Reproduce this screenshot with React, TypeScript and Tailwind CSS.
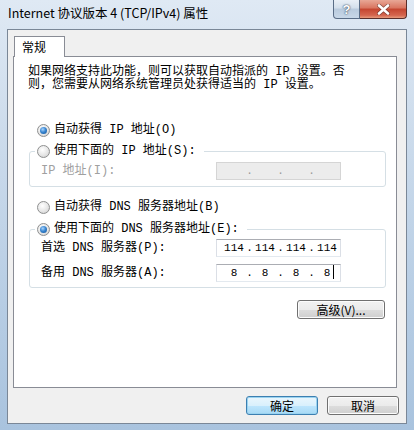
const cjk = "font-['Noto_Sans_CJK_SC',sans-serif]";
const simsun = "font-['Liberation_Mono','Noto_Sans_CJK_SC',monospace]";

function Radio({ checked }: { checked?: boolean }) {
  return (
    <span className="relative inline-flex h-[13px] w-[13px] shrink-0 items-center justify-center rounded-full border border-[#8e8f8f] bg-[radial-gradient(circle_at_40%_35%,#ffffff_0%,#e6e6e6_55%,#c9c9c9_100%)]">
      {checked && (
        <span className="h-[7px] w-[7px] rounded-full bg-[radial-gradient(circle_at_40%_35%,#a8d4ff_0%,#3a86d0_45%,#0d4f96_100%)]" />
      )}
    </span>
  );
}

function RadioRow({ label, checked }: { label: string; checked?: boolean }) {
  return (
    <div className="flex h-[13px] items-center">
      <Radio checked={checked} />
      <span className={`ml-[4px] whitespace-pre text-[12px] leading-[13px] text-black ${simsun}`}>{label}</span>
    </div>
  );
}

function IpBox({ values, disabled, caret }: { values: string[]; disabled?: boolean; caret?: boolean }) {
  return (
    <div
      className={`flex h-[18px] w-[125px] items-center border pl-[5px] ${
        disabled
          ? "border-[#d5d5d5] bg-[#ececec] text-[#9a9a9a]"
          : "border-[#abadb3] border-b-[#e3e9ef] border-l-[#dbdfe6] border-r-[#dbdfe6] bg-white text-black"
      } ${simsun} text-[11px] leading-[14px]`}
    >
      {values.map((v, i) => (
        <div key={i} className="flex">
          <span className="relative w-[24px] text-center">
            {v}
            {caret && i === 3 && (
              <span className="absolute right-[5px] top-[-1px] h-[14px] w-px bg-black" />
            )}
          </span>
          {i < 3 && <span className="w-[7px] text-center">.</span>}
        </div>
      ))}
    </div>
  );
}

function WinButton({ label, focused, className = "" }: { label: string; focused?: boolean; className?: string }) {
  return (
    <div
      className={`flex h-[19px] w-[72px] items-center justify-center rounded-[3px] border ${
        focused
          ? "border-[#3c7fb1] bg-[linear-gradient(180deg,#eaf6fd_0%,#d9f0fc_50%,#bee6fd_51%,#a7d9f5_100%)] shadow-[inset_0_0_0_1px_#9ad3f0]"
          : "border-[#707070] bg-[linear-gradient(180deg,#f2f2f2_0%,#ebebeb_50%,#dddddd_51%,#cfcfcf_100%)] shadow-[inset_0_0_0_1px_#fcfcfc]"
      } ${cjk} text-[12px] leading-[14px] text-black ${className}`}
    >
      {label}
    </div>
  );
}

export default function App() {
  return (
    <div className="flex h-[430px] w-[414px] flex-col overflow-hidden bg-[linear-gradient(180deg,#dfe9f4_0%,#cddcec_30%,#b7cde4_70%,#a9c3de_100%)] px-[7px]">
      {/* Title bar */}
      <div className="relative flex h-[29px] shrink-0 items-center">
        <span className={`ml-[1px] mt-[-2px] text-[12.5px] text-black ${cjk}`}>
          Internet 协议版本 4 (TCP/IPv4) 属性
        </span>
        <div className="absolute right-[0px] top-0 flex h-[19px]">
          <div className="flex w-[27px] items-center justify-center rounded-bl-[4px] border border-t-0 border-[#5a6d86] bg-[linear-gradient(180deg,#e9eff6_0%,#d3dfeb_45%,#b9cadd_50%,#c8d8e8_100%)] font-['Liberation_Sans',sans-serif] text-[13px] font-bold leading-none text-white [text-shadow:0_0_2px_#3b4a5e,0_0_1px_#3b4a5e]">
            ?
          </div>
          <div className="flex w-[47px] items-center justify-center rounded-br-[4px] border border-l-0 border-t-0 border-[#5a2e2a] bg-[linear-gradient(180deg,#e8a796_0%,#d9745f_45%,#c44530_50%,#d5664f_85%,#e79b7d_100%)]">
            <svg width="13" height="11" viewBox="0 0 13 11">
              <path d="M2 1.5 L11 9.5 M11 1.5 L2 9.5" stroke="#3a1c18" strokeWidth="4" strokeLinecap="round" opacity="0.5" />
              <path d="M2 1.5 L11 9.5 M11 1.5 L2 9.5" stroke="#ffffff" strokeWidth="2.6" strokeLinecap="round" />
            </svg>
          </div>
        </div>
      </div>

      {/* Client area */}
      <div className="flex h-[395px] shrink-0 flex-col border border-[#7a8797] bg-[#f0f0f0]">
        {/* Tab strip */}
        <div className="ml-[6px] mt-[6px] flex">
          <div className={`relative z-10 -mb-px flex h-[21px] w-[51px] items-center border border-b-0 border-[#898c95] bg-white pl-[7px] ${cjk} text-[12px] leading-[14px] text-black`}>
            常规
          </div>
        </div>

        {/* Tab panel */}
        <div className="ml-[5px] flex h-[332px] w-[384px] flex-col border border-[#898c95] bg-white">
          <p className={`ml-[14px] mt-[9px] text-[12px] leading-[13px] text-black ${simsun}`}>
            如果网络支持此功能，则可以获取自动指派的 IP 设置。否
            <br />
            则，您需要从网络系统管理员处获得适当的 IP 设置。
          </p>

          <div className="ml-[23px] mt-[32px]">
            <RadioRow label="自动获得 IP 地址(O)" checked />
          </div>

          <fieldset className="ml-[15px] mt-[8px] w-[357px] rounded-[3px] border border-[#d5dfe5] pb-[6px]">
            <legend className="ml-[5px] bg-white pl-[2px] pr-[8px]">
              <RadioRow label="使用下面的 IP 地址(S):" />
            </legend>
            <div className="mt-[4px] flex items-center pl-[11px]">
              <span className={`w-[175px] text-[12px] leading-[13px] text-[#a0a0a0] ${simsun}`}>IP 地址(I):</span>
              <IpBox values={["", "", "", ""]} disabled />
            </div>
          </fieldset>

          <div className="ml-[23px] mt-[14px]">
            <RadioRow label="自动获得 DNS 服务器地址(B)" />
          </div>

          <fieldset className="ml-[15px] mt-[9px] w-[357px] rounded-[3px] border border-[#d5dfe5] pb-[5px]">
            <legend className="ml-[5px] bg-white pl-[2px] pr-[8px]">
              <RadioRow label="使用下面的 DNS 服务器地址(E):" checked />
            </legend>
            <div className="mt-[3px] flex items-center pl-[11px]">
              <span className={`w-[175px] text-[12px] leading-[13px] text-black ${simsun}`}>首选 DNS 服务器(P):</span>
              <IpBox values={["114", "114", "114", "114"]} />
            </div>
            <div className="mt-[7px] flex items-center pl-[11px]">
              <span className={`w-[175px] text-[12px] leading-[13px] text-black ${simsun}`}>备用 DNS 服务器(A):</span>
              <IpBox values={["8", "8", "8", "8"]} caret />
            </div>
          </fieldset>

          <div className="mr-[11px] mt-[12px] flex justify-end">
            <WinButton label="高级(V)..." className="w-[88px]" />
          </div>
        </div>

        {/* Dialog buttons */}
        <div className="mr-[7px] mt-[8px] flex justify-end gap-[9px]">
          <WinButton label="确定" focused />
          <WinButton label="取消" />
        </div>
      </div>
    </div>
  );
}
